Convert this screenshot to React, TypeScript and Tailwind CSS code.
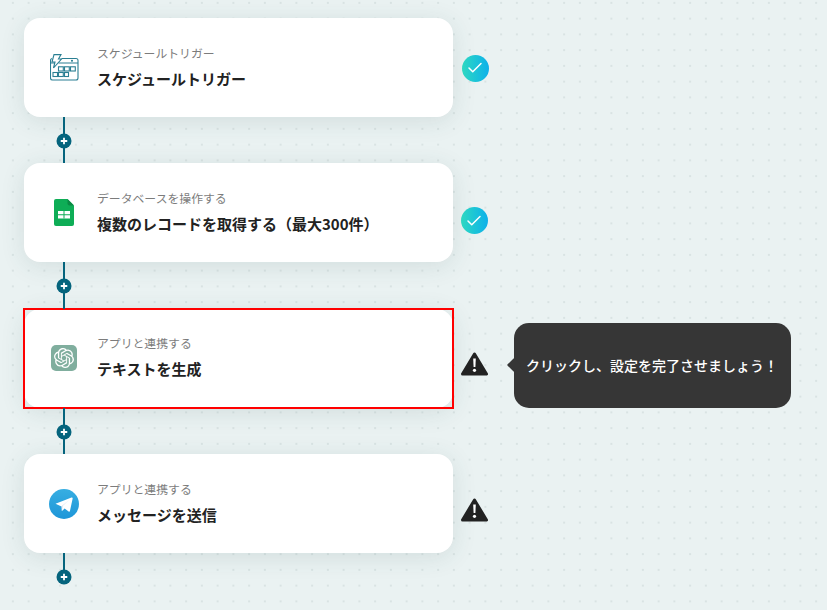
import { Check } from 'lucide-react';
import { SiOpenai } from 'react-icons/si';

function ScheduleIcon() {
  return (
    <svg width="29" height="27" viewBox="0 0 29 27" fill="none" stroke="#2a7f93" strokeWidth="1.100">
      <path d="M2 4.500a2 2 0 0 0-1.500 2V24a2 2 0 0 0 2 2H26a2 2 0 0 0 2-2V6.500a2 2 0 0 0-2-2H11.500" />
      <path d="M0.500 9H4.500M8.500 9H28" />
      <circle cx="22" cy="6.800" r="0.500" fill="#2a7f93" />
      <path d="M4 0.600h7L8.500 5h3L3.500 14l1.500-6H2z" fill="#fff" />
      <rect x="8.500" y="12.800" width="4.800" height="4.200" />
      <rect x="14.500" y="12.800" width="4.800" height="4.200" />
      <rect x="20.500" y="12.800" width="4.800" height="4.200" />
      <rect x="3" y="18.500" width="4.500" height="4" />
      <rect x="8.500" y="18.500" width="4.800" height="4" />
      <rect x="14.500" y="18.500" width="4" height="4" />
    </svg>
  );
}

function SheetsIcon() {
  return (
    <svg width="20" height="27" viewBox="0 0 20 27">
      <path d="M2 0h11.500L20 6.500V25a2 2 0 0 1-2 2H2a2 2 0 0 1-2-2V2a2 2 0 0 1 2-2z" fill="#0ead56" />
      <path d="M13.500 0L20 6.500h-4.500a2 2 0 0 1-2-2z" fill="#0a8a44" />
      <path d="M4 12h12v7.500H4z" fill="#fff" />
      <path d="M9.500 12h1v7.500h-1zM4 15.300h12v1H4z" fill="#0ead56" />
    </svg>
  );
}

function OpenAiIcon() {
  return (
    <span className="flex h-[26px] w-[26px] items-center justify-center rounded-[5px] bg-[#80ae9e] text-white">
      <SiOpenai size={20} />
    </span>
  );
}

function TelegramIcon() {
  return (
    <svg width="30" height="30" viewBox="0 0 30 30">
      <defs>
        <linearGradient id="tg" x1="0" y1="0" x2="0" y2="1">
          <stop offset="0" stopColor="#37aee2" />
          <stop offset="1" stopColor="#1e96d8" />
        </linearGradient>
      </defs>
      <circle cx="15" cy="15" r="15" fill="url(#tg)" />
      <path d="M6.500 14.800L22.500 8.500c.8-.3 1.400.2 1.100 1.300L21 21.800c-.2.900-.7 1.100-1.400.7l-4-3-2 1.900c-.3.300-.5.400-.9.400l.3-4z" fill="#fff" />
      <path d="M12.200 17.500l.8 4.300 .6-4.800 6.500-5.900z" fill="#c8daea" />
    </svg>
  );
}

function Done() {
  return (
    <span className="flex h-[27px] w-[27px] items-center justify-center rounded-full bg-gradient-to-r from-[#2fd8c0] to-[#0fb0ea] text-white">
      <Check size={18} strokeWidth={2} />
    </span>
  );
}

function Warn() {
  return (
    <svg width="27" height="24" viewBox="0 0 27 24">
      <path d="M13.500 2L25.500 22H1.500z" fill="#222" stroke="#222" strokeWidth="3" strokeLinejoin="round" />
      <path d="M12.200 6.500h2.600l-.4 8.500h-1.800z" fill="#fff" />
      <circle cx="13.500" cy="18.300" r="1.600" fill="#fff" />
    </svg>
  );
}

function Connector({ last = false }: { last?: boolean }) {
  return (
    <div className={`flex w-[81px] justify-center ${last ? 'h-[23px]' : 'h-[46.33px]'}`}>
      <div className="relative h-full w-[2px] bg-[#05647d]">
        <span className="absolute top-[23.670px] left-1/2 flex h-[15px] w-[15px] -translate-x-1/2 -translate-y-1/2 items-center justify-center rounded-full bg-[#05647d]">
          <svg width="7" height="7" viewBox="0 0 7 7" fill="#fff">
            <path d="M2.600 0h1.800v2.600H7v1.800H4.400V7H2.600V4.400H0V2.600h2.600z" />
          </svg>
        </span>
      </div>
    </div>
  );
}

const STEPS = [
  { sub: 'スケジュールトリガー', title: 'スケジュールトリガー', icon: <ScheduleIcon />, done: true, statusPos: 'mt-[36.500px] ml-[9px]' },
  { sub: 'データベースを操作する', title: '複数のレコードを取得する（最大300件）', icon: <SheetsIcon />, done: true, statusPos: 'mt-[44px] ml-[8px]' },
  { sub: 'アプリと連携する', title: 'テキストを生成', icon: <OpenAiIcon />, done: false, active: true, statusPos: 'mt-[43.500px] ml-[8px]' },
  { sub: 'アプリと連携する', title: 'メッセージを送信', icon: <TelegramIcon />, done: false, statusPos: 'mt-[43.500px] ml-[8px]' },
];

export default function App() {
  return (
    <div className="h-[610px] w-[827px] overflow-hidden bg-[#eaf2f2] bg-[radial-gradient(circle,#d9e3e3_1px,transparent_1.2px)] bg-[size:15.75px_15.75px] bg-[position:5px_-5px] pt-[18px] pl-[23.500px] font-['Noto_Sans_CJK_JP',sans-serif]">
      {STEPS.map((s, i) => (
        <div key={s.title}>
          <div className="flex items-start">
            <div className={`h-[99px] w-[429px] shrink-0 ${s.active ? 'outline-2 -outline-offset-1 outline-[#f00]' : ''}`}>
              <div className="flex h-full items-center rounded-[16px] bg-white shadow-[0_4px_24px_rgba(40,80,80,0.12)]">
                <div className="flex w-[81px] shrink-0 justify-center">{s.icon}</div>
                <div className="-mt-[1px] -ml-[7.500px]">
                  <div className="text-[11.850px] leading-[18px] text-[#7c7c7c]">{s.sub}</div>
                  <div className="mt-[5px] text-[15px] leading-[24px] font-semibold text-[#222]">{s.title}</div>
                </div>
              </div>
            </div>
            <div className={`flex w-[27px] shrink-0 justify-center ${s.statusPos}`}>
              {s.done ? <Done /> : <Warn />}
            </div>
            {s.active && (
              <div className="relative mt-[14.330px] ml-[26px] flex h-[85px] w-[277px] items-center justify-center rounded-[15px] bg-[#363636] text-[14px] font-medium text-white">
                <span className="absolute top-1/2 -left-[5px] h-[10px] w-[10px] -translate-y-1/2 rotate-45 rounded-[1px] bg-[#363636]" />
                クリックし、設定を完了させましょう！
              </div>
            )}
          </div>
          <Connector last={i === STEPS.length - 1} />
        </div>
      ))}
    </div>
  );
}
